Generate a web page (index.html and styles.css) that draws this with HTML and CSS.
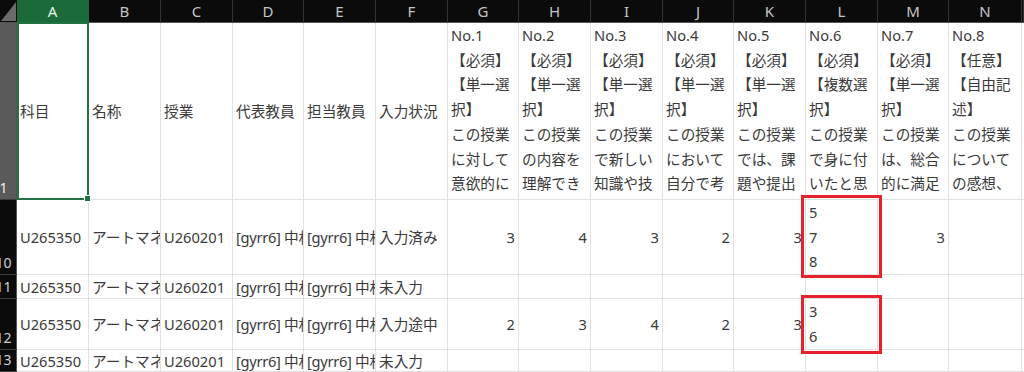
FILE: index.html
```html
<!DOCTYPE html>
<html lang="ja">
<head>
<meta charset="utf-8">
<title>Sheet</title>
<link rel="stylesheet" href="styles.css">
</head>
<body>
<div class="sheet">
  <div class="corner"><svg class="tri" width="15" height="19" viewBox="0 0 15 19"><polygon points="15,0 15,19 0,19" fill="#6b6b6b"/></svg></div>
  <div class="ch chsel">A</div>
  <div class="ch">B</div>
  <div class="ch">C</div>
  <div class="ch">D</div>
  <div class="ch">E</div>
  <div class="ch">F</div>
  <div class="ch">G</div>
  <div class="ch">H</div>
  <div class="ch">I</div>
  <div class="ch">J</div>
  <div class="ch">K</div>
  <div class="ch">L</div>
  <div class="ch">M</div>
  <div class="ch">N</div>
  <div class="ch"></div>

  <div class="rh rhsel"><span>1</span></div>
  <div class="c a1"><span>科目</span><div class="selbox"><div class="handle"></div></div></div>
  <div class="c"><span>名称</span></div>
  <div class="c"><span>授業</span></div>
  <div class="c"><span>代表教員</span></div>
  <div class="c"><span>担当教員</span></div>
  <div class="c"><span>入力状況</span></div>
  <div class="c wrap"><span>No.1<br>【必須】<br>【単一選<br>択】<br>この授業<br>に対して<br>意欲的に</span></div>
  <div class="c wrap"><span>No.2<br>【必須】<br>【単一選<br>択】<br>この授業<br>の内容を<br>理解でき</span></div>
  <div class="c wrap"><span>No.3<br>【必須】<br>【単一選<br>択】<br>この授業<br>で新しい<br>知識や技</span></div>
  <div class="c wrap"><span>No.4<br>【必須】<br>【単一選<br>択】<br>この授業<br>において<br>自分で考</span></div>
  <div class="c wrap"><span>No.5<br>【必須】<br>【単一選<br>択】<br>この授業<br>では、課<br>題や提出</span></div>
  <div class="c wrap"><span>No.6<br>【必須】<br>【複数選<br>択】<br>この授業<br>で身に付<br>いたと思</span></div>
  <div class="c wrap"><span>No.7<br>【必須】<br>【単一選<br>択】<br>この授業<br>は、総合<br>的に満足</span></div>
  <div class="c wrap"><span>No.8<br>【任意】<br>【自由記<br>述】<br>この授業<br>について<br>の感想、</span></div>
  <div class="c"></div>

  <div class="rh"><span>10</span></div>
  <div class="c"><span>U265350</span></div>
  <div class="c"><span>アートマネジメント</span></div>
  <div class="c"><span>U260201</span></div>
  <div class="c"><span class="nm">[gyrr6] 中村</span></div>
  <div class="c"><span class="nm">[gyrr6] 中村</span></div>
  <div class="c"><span>入力済み</span></div>
  <div class="c num"><span>3</span></div>
  <div class="c num"><span>4</span></div>
  <div class="c num"><span>3</span></div>
  <div class="c num"><span>2</span></div>
  <div class="c num"><span>3</span></div>
  <div class="c wrap mark"><span>5<br>7<br>8</span><div class="redbox rb1"></div></div>
  <div class="c num"><span>3</span></div>
  <div class="c"></div>
  <div class="c"></div>

  <div class="rh"><span>11</span></div>
  <div class="c"><span>U265350</span></div>
  <div class="c"><span>アートマネジメント</span></div>
  <div class="c"><span>U260201</span></div>
  <div class="c"><span class="nm">[gyrr6] 中村</span></div>
  <div class="c"><span class="nm">[gyrr6] 中村</span></div>
  <div class="c"><span>未入力</span></div>
  <div class="c"></div>
  <div class="c"></div>
  <div class="c"></div>
  <div class="c"></div>
  <div class="c"></div>
  <div class="c"></div>
  <div class="c"></div>
  <div class="c"></div>
  <div class="c"></div>

  <div class="rh"><span>12</span></div>
  <div class="c"><span>U265350</span></div>
  <div class="c"><span>アートマネジメント</span></div>
  <div class="c"><span>U260201</span></div>
  <div class="c"><span class="nm">[gyrr6] 中村</span></div>
  <div class="c"><span class="nm">[gyrr6] 中村</span></div>
  <div class="c"><span>入力途中</span></div>
  <div class="c num"><span>2</span></div>
  <div class="c num"><span>3</span></div>
  <div class="c num"><span>4</span></div>
  <div class="c num"><span>2</span></div>
  <div class="c num"><span>3</span></div>
  <div class="c wrap mark"><span>3<br>6</span><div class="redbox rb2"></div></div>
  <div class="c"></div>
  <div class="c"></div>
  <div class="c"></div>

  <div class="rh"><span>13</span></div>
  <div class="c"><span>U265350</span></div>
  <div class="c"><span>アートマネジメント</span></div>
  <div class="c"><span>U260201</span></div>
  <div class="c"><span class="nm">[gyrr6] 中村</span></div>
  <div class="c"><span class="nm">[gyrr6] 中村</span></div>
  <div class="c"><span>未入力</span></div>
  <div class="c"></div>
  <div class="c"></div>
  <div class="c"></div>
  <div class="c"></div>
  <div class="c"></div>
  <div class="c"></div>
  <div class="c"></div>
  <div class="c"></div>
  <div class="c"></div>
</div>
</body>
</html>
```

FILE: styles.css
```css
html, body {
  margin: 0;
  padding: 0;
  background: #ffffff;
  overflow: hidden;
}

.sheet {
  display: grid;
  grid-template-columns: 17px 72px 72px 72px 71px 72px 72px 71px 72px 72px 71px 72px 72px 71px 73px 2px;
  grid-template-rows: 23px 177px 75px 24px 51px 22px;
  width: 1024px;
  font-family: "Noto Sans", "Noto Sans CJK JP", sans-serif;
  font-size: 14.67px;
  color: #3a3a3a;
}

.corner {
  background: #0b0b0b;
  border-bottom: 1px solid #555555;
  box-sizing: border-box;
  display: flex;
  justify-content: flex-end;
  align-items: flex-end;
  padding: 0 1px 1px 0;
}

.tri {
  display: block;
}

.ch {
  background: #0b0b0b;
  color: #c6c6c6;
  font-family: "Noto Sans", sans-serif;
  font-size: 15px;
  display: flex;
  align-items: center;
  justify-content: center;
  box-sizing: border-box;
  border-right: 1px solid #333333;
  border-bottom: 1px solid #555555;
  overflow: hidden;
}

.chsel {
  background: #1b6b3a;
  color: #e6f2e9;
  border-bottom: 1px solid #2a8a4e;
  border-right: 1px solid #1b6b3a;
}

.rh {
  background: #0b0b0b;
  color: #cfcfcf;
  font-family: "Noto Sans", sans-serif;
  font-size: 14px;
  line-height: 20px;
  display: flex;
  align-items: flex-end;
  padding-bottom: 1px;
  box-sizing: border-box;
  border-bottom: 1px solid #3a3a3a;
  border-right: 1px solid #555555;
  overflow: hidden;
}

.rh span {
  display: block;
  flex: 0 0 28px;
  width: 28px;
  margin-left: -10.5px;
  text-align: center;
}

.rhsel {
  background: #5a5a5a;
  color: #f0f0f0;
}

.c {
  box-sizing: border-box;
  border-right: 1px solid #e1e1e1;
  border-bottom: 1px solid #e1e1e1;
  display: flex;
  align-items: center;
  padding: 0 3px;
  overflow: hidden;
  white-space: nowrap;
  line-height: 20px;
}

.nm {
  letter-spacing: -0.3px;
}

.c.num {
  justify-content: flex-end;
}

.c.wrap {
  align-items: flex-start;
  line-height: 24.7px;
}

.c.mark {
  line-height: 24.5px;
  position: relative;
  overflow: visible;
}

.a1 {
  position: relative;
  overflow: visible;
}

.selbox {
  position: absolute;
  top: -1px;
  left: 0;
  right: -1px;
  bottom: -1px;
  border: 2px solid #217346;
  pointer-events: none;
}

.handle {
  position: absolute;
  right: -4px;
  bottom: -4px;
  width: 5px;
  height: 5px;
  background: #217346;
  border: 1px solid #ffffff;
}

.redbox {
  position: absolute;
  left: -5px;
  right: -5px;
  border: 3px solid #e8202a;
  box-sizing: border-box;
}

.rb1 {
  top: -5px;
  bottom: -4px;
}

.rb2 {
  top: -4px;
  bottom: -5px;
}
```
